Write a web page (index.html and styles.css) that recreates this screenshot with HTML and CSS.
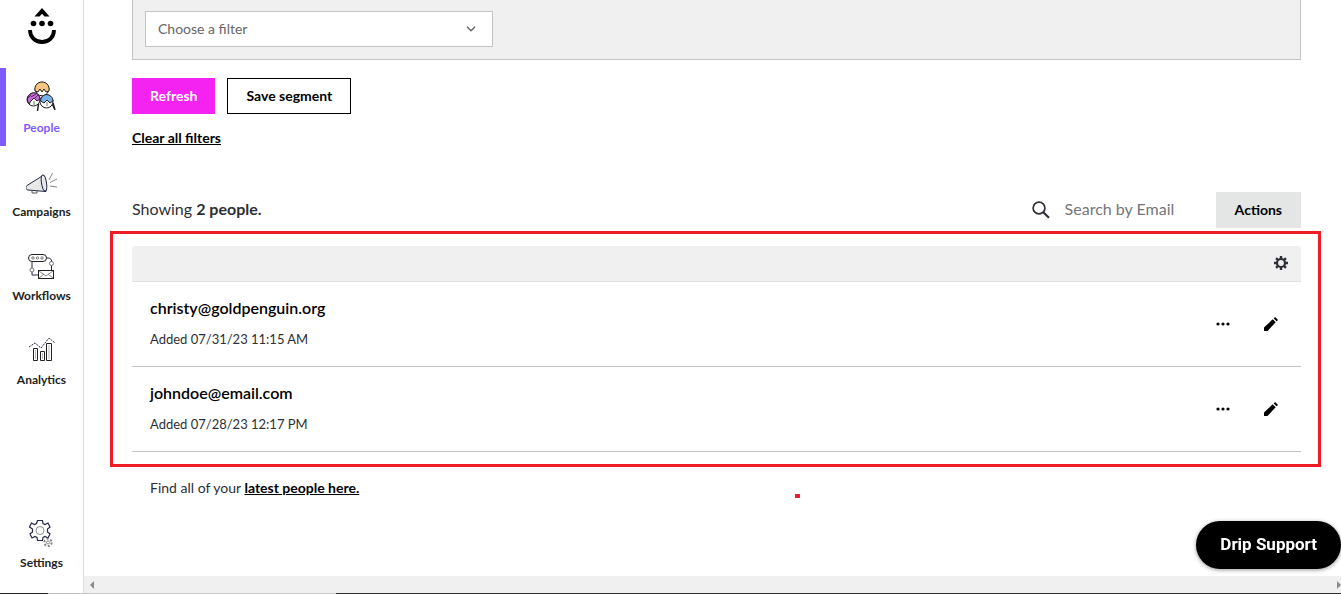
FILE: index.html
```html
<!DOCTYPE html>
<html lang="en">

<head>
    <meta charset="UTF-8">
    <title>People</title>
    <link rel="stylesheet" href="styles.css">
</head>

<body>
    <div class="app">
        <nav class="sidebar">
            <a class="logo" href="#" aria-label="Home">
                <svg width="28" height="36" viewBox="0 0 28 36">
                    <path d="M6.500 8.500 14 0l7.500 8.500h-5L14 5.800l-2.500 2.700z" />
                    <circle cx="5.500" cy="15.500" r="2.800" />
                    <circle cx="14" cy="15.500" r="2.800" />
                    <circle cx="22.500" cy="15.500" r="2.800" />
                    <path d="M2 22c0 7 5 12 12 12s12-5 12-12" fill="none" stroke="#000" stroke-width="3.800" />
                </svg>
            </a>
            <a class="nav-item active" href="#">
                <svg width="32" height="32" viewBox="0 0 32 32" fill="#fff" stroke="#222" stroke-width="1">
                    <circle cx="16" cy="8" r="6.800" />
                    <path d="M9 10C7-2 25-2 23 10l-3 1-2-3-2 3-2-3-2 3z" fill="#f6c581" />
                    <path d="M12.500 23l-1 7M25 20l4 9M27 22l2 7" fill="none" stroke-width="1.500" />
                    <circle cx="7.500" cy="18.500" r="6.500" />
                    <path d="M1.500 20c-1-10 12-11 12.500-2l-3 2-3-3-3 3-2 3z" fill="#c66bd4" />
                    <path d="M2 17l3-3m0 2l5-3m-1 4l3-3" stroke="#5d2470" />
                    <circle cx="20.500" cy="20.500" r="6.500" />
                    <path d="M14.500 20c1-9 12-8 12.500 0l-3 2-3-3-3 3z" fill="#79b2e9" />
                    <path d="M8 20v4M21 21v4" stroke="#777" />
                </svg>
                <span>People</span>
            </a>
            <a class="nav-item" href="#">
                <svg width="32" height="32" viewBox="0 0 32 32" fill="none" stroke="#222845" stroke-width="1">
                    <path d="M1 20.500 17 10.500l3 16-18-1.500c-2 0-3-3-1-4.500z" fill="#e8e8e8" />
                    <ellipse cx="18" cy="18" rx="2.500" ry="8" fill="#e8e8e8" transform="rotate(-9 18 18)" />
                    <path d="M6 25v3h5v-2.500" stroke="#555" />
                    <path d="M23 15l3.500-7M24 17.500l7-3.500M24 21l7 1" stroke="#888" />
                </svg>
                <span>Campaigns</span>
            </a>
            <a class="nav-item" href="#">
                <svg width="32" height="32" viewBox="0 0 32 32" fill="none" stroke="#222" stroke-width="1">
                    <rect x="2.500" y="5.500" width="18" height="7" rx="3.500" />
                    <g stroke="#777">
                        <circle cx="7" cy="9" r="1.200" />
                        <circle cx="11.500" cy="9" r="1.200" />
                        <circle cx="16" cy="9" r="1.200" />
                    </g>
                    <path d="M20.500 9h3l2 2v2M25.500 16v5M6 13v8M6 23v3h6.500" stroke="#222845" />
                    <circle cx="25.500" cy="14.500" r="2" fill="#fff" stroke="#777" />
                    <circle cx="6" cy="21" r="2" fill="#fff" stroke="#777" />
                    <rect x="12.500" y="21.500" width="15" height="8" fill="#fff" />
                    <path d="M13 22l7 5 7-5M13 29l5-4M27 29l-5-4" stroke="#888" />
                </svg>
                <span>Workflows</span>
            </a>
            <a class="nav-item" href="#">
                <svg width="32" height="32" viewBox="0 0 32 32" fill="none" stroke="#222" stroke-width="1">
                    <path d="M7.500 15.500h4v12h-4zM14.500 18.500h4v9h-4zM20.500 10.500h5v17h-5z" />
                    <path d="M9.500 17v9M16.500 20v6M23 12v14" stroke="#bbb" />
                    <path d="M3 14l6-4 6 5 8-10 6 5" stroke="#222845" stroke-dasharray="2 1" />
                </svg>
                <span>Analytics</span>
            </a>
            <a class="nav-item settings" href="#">
                <svg width="32" height="32" viewBox="0 0 32 32" fill="none" stroke="#222845" stroke-width="1.200">
                    <path d="M11.500 4.500h5l.5 3 2 1 3-1.500 2 4-2.500 2v3l2.500 2-2 4-3-1.500-2 1-.5 3h-5l-.5-3-2-1-3 1.500-2-4 2.500-2v-3L3.500 11l2-4 3 1.500 2-1z" />
                    <circle cx="14" cy="14.500" r="4" stroke="#888" stroke-width="1" />
                    <circle cx="22" cy="26.500" r="3.600" stroke="#888" stroke-width="2" stroke-dasharray="2 1.770" />
                    <circle cx="22" cy="26.500" r="1.500" stroke="#888" stroke-width="1" />
                </svg>
                <span>Settings</span>
            </a>
        </nav>

        <div class="page">
            <main class="content">
                <div class="filter-panel">
                    <div class="select-wrap">
                        <select class="filter-select" aria-label="Filter">
                            <option>Choose a filter</option>
                        </select>
                        <svg class="chevron" width="10" height="6" viewBox="0 0 10 6" fill="none" stroke="#666" stroke-width="1.400">
                            <path d="M1 .8l4 4 4-4" />
                        </svg>
                    </div>
                </div>

                <div class="buttons">
                    <button class="btn btn-primary" type="button">Refresh</button>
                    <button class="btn btn-outline" type="button">Save segment</button>
                </div>
                <a class="clear" href="#">Clear all filters</a>

                <div class="toolbar">
                    <p class="count">Showing <strong>2 people.</strong></p>
                    <label class="search">
                        <svg width="18" height="18" viewBox="0 0 18 18" fill="none" stroke="#2d2f36" stroke-width="1.700">
                            <circle cx="7" cy="7" r="5.900" />
                            <path d="M11.200 11.200l5.800 5.600" stroke-width="2.200" />
                        </svg>
                        <input type="text" placeholder="Search by Email" aria-label="Search by Email">
                    </label>
                    <button class="btn btn-grey" type="button">Actions</button>
                </div>

                <div class="highlight">
                    <table class="people">
                        <thead>
                            <tr>
                                <th colspan="2">
                                    <button class="icon-btn" type="button" aria-label="Table settings">
                                        <svg width="14" height="14" viewBox="0 0 14 14" fill="none" stroke="#2d2f36">
                                            <circle cx="7" cy="7" r="4" stroke-width="2.200" />
                                            <path d="M7 0v3M7 11v3M0 7h3M11 7h3M2.050 2.050l2 2M9.950 9.950l2 2M11.950 2.050l-2 2M4.050 9.950l-2 2" stroke-width="2.400" />
                                        </svg>
                                    </button>
                                </th>
                            </tr>
                        </thead>
                        <tbody>
                            <tr>
                                <td>
                                    <a class="email" href="#">christy@goldpenguin.org</a>
                                    <p class="added">Added 07/31/23 11:15 AM</p>
                                </td>
                                <td class="actions">
                                    <button class="icon-btn" type="button" aria-label="More">
                                        <svg width="14" height="14" viewBox="0 0 14 14">
                                            <circle cx="2" cy="7" r="1.600" />
                                            <circle cx="7" cy="7" r="1.600" />
                                            <circle cx="12" cy="7" r="1.600" />
                                        </svg>
                                    </button>
                                    <button class="icon-btn" type="button" aria-label="Edit">
                                        <svg width="14" height="14" viewBox="0 0 14 14">
                                            <path d="M0 14v-3.500l8.700-8.200 3 3L3.500 14zM9.700 1.400 11.100 0 14 2.900l-1.400 1.400z" />
                                        </svg>
                                    </button>
                                </td>
                            </tr>
                            <tr>
                                <td>
                                    <a class="email" href="#">johndoe@email.com</a>
                                    <p class="added">Added 07/28/23 12:17 PM</p>
                                </td>
                                <td class="actions">
                                    <button class="icon-btn" type="button" aria-label="More">
                                        <svg width="14" height="14" viewBox="0 0 14 14">
                                            <circle cx="2" cy="7" r="1.600" />
                                            <circle cx="7" cy="7" r="1.600" />
                                            <circle cx="12" cy="7" r="1.600" />
                                        </svg>
                                    </button>
                                    <button class="icon-btn" type="button" aria-label="Edit">
                                        <svg width="14" height="14" viewBox="0 0 14 14">
                                            <path d="M0 14v-3.500l8.700-8.200 3 3L3.500 14zM9.700 1.400 11.100 0 14 2.900l-1.400 1.400z" />
                                        </svg>
                                    </button>
                                </td>
                            </tr>
                        </tbody>
                    </table>
                </div>

                <p class="latest">Find all of your <a href="#">latest people here.</a></p>
            </main>
            <div class="scrollbar">
                <svg width="4" height="8" viewBox="0 0 4 8"><path d="M4 0v8L0 4z" /></svg>
                <svg width="4" height="8" viewBox="0 0 4 8"><path d="M0 0v8l4-4z" /></svg>
            </div>
        </div>
    </div>
    <div class="bottom-edge"></div>
    <div class="mark"></div>
    <button class="support" type="button">Drip Support</button>
</body>

</html>
```
FILE: styles.css
```css
* {
    margin: 0;
    padding: 0;
    box-sizing: border-box;
}

body {
    display: flex;
    flex-direction: column;
    min-height: 100vh;
    font-family: Lato, "Liberation Sans", sans-serif;
    font-size: 14px;
    line-height: 20px;
    color: #2d2f36;
    background-color: #fff;
}

a {
    color: #000;
}

svg {
    display: block;
}

button,
input,
select {
    font-family: inherit;
}

button {
    cursor: pointer;
}

.app {
    display: flex;
    flex: 1;
}

/* sidebar */
.sidebar {
    display: flex;
    flex-direction: column;
    gap: 6px;
    width: 84px;
    padding: 8px 0 12px;
    border-right: 1px solid #dcdcdc;
}

.logo {
    display: flex;
    justify-content: center;
    height: 54px;
}

.nav-item {
    display: flex;
    flex-direction: column;
    align-items: center;
    gap: 5px;
    height: 78px;
    padding: 13px 0 0;
    font-size: 12px;
    font-weight: 700;
    color: #222;
    text-decoration: none;
}

.nav-item.active {
    padding-right: 6px;
    border-left: 6px solid #7f5bff;
    color: #7f5bff;
}

.nav-item.settings {
    margin-top: auto;
}

/* content */
.page {
    display: flex;
    flex: 1;
    flex-direction: column;
    min-width: 0;
}

.content {
    flex: 1;
    padding: 0 40px 0 48px;
}

.filter-panel {
    padding: 11px 12px 12px;
    border: 1px solid #c4c4c4;
    border-top: 0;
    background-color: #f0f0f0;
}

.select-wrap {
    display: grid;
    align-items: center;
    width: 348px;
}

.filter-select {
    grid-area: 1 / 1;
    width: 100%;
    height: 36px;
    padding: 0 12px 2px;
    border: 1px solid #c4c4c4;
    border-radius: 0;
    appearance: none;
    background-color: #fff;
    font-size: 14px;
    color: #666;
}

.chevron {
    grid-area: 1 / 1;
    justify-self: end;
    margin-right: 17px;
    pointer-events: none;
}

.buttons {
    display: flex;
    gap: 12px;
    margin: 18px 0 14px;
}

.btn {
    height: 36px;
    padding: 0 17px 2px;
    border: 1px solid transparent;
    font-size: 14px;
    font-weight: 700;
    color: #000;
}

.btn-primary {
    background-color: #f423f1;
    color: #fff;
}

.btn-outline {
    padding: 0 18px 2px;
    border-color: #000;
    background-color: #fff;
}

.btn-grey {
    padding: 0 18px 2px;
    background-color: #e4e6e5;
}

.clear {
    display: inline-block;
    font-weight: 700;
}

.toolbar {
    display: flex;
    align-items: center;
    margin: 44px 0 3px;
    font-size: 16px;
}

.count {
    flex: 1;
    padding-bottom: 2px;
}

.search {
    display: flex;
    align-items: center;
    gap: 15px;
    margin-right: 15px;
}

.search input {
    width: 136px;
    height: 36px;
    padding-bottom: 3px;
    border: 0;
    outline: none;
    font-size: 16px;
}

.search input::placeholder {
    color: #747679;
}

.highlight {
    margin: 0 -20px 0 -22px;
    padding: 12px 17px 12px 19px;
    border: 3px solid #ee1c25;
}

.people {
    width: 100%;
    border-spacing: 0;
}

.people th {
    height: 36px;
    padding: 0 13px 2px;
    border-bottom: 1px solid #e0e2e1;
    border-radius: 3px 3px 0 0;
    background-color: #f0f0f0;
}

.people th .icon-btn {
    margin-left: auto;
}

.people td {
    height: 85px;
    padding: 0 18px 2px;
    border-bottom: 1px solid #c4c4c4;
}

.people .actions {
    width: 120px;
    text-align: right;
    white-space: nowrap;
}

.email {
    font-size: 16px;
    font-weight: 600;
    text-decoration: none;
}

.added {
    margin-top: 10px;
    font-size: 13px;
}

.icon-btn {
    display: block;
    padding: 0;
    border: 0;
    background: none;
}

.actions .icon-btn {
    display: inline-block;
    margin: 0 5px 0 25px;
    vertical-align: middle;
}

.latest {
    padding: 11px 18px;
}

.latest a {
    font-weight: 700;
}

.scrollbar {
    display: flex;
    align-items: center;
    justify-content: space-between;
    height: 17px;
    padding: 0 0 0 6px;
    background-color: #f0f0f0;
    fill: #8a8a8a;
}

.bottom-edge {
    height: 1px;
    background: linear-gradient(to right, #222 48px, #c4c4c4 48px, #c4c4c4 336px, #333 336px);
}

/* overlays */
.mark {
    position: absolute;
    top: 494px;
    left: 795px;
    width: 5px;
    height: 4px;
    background-color: #ee1c25;
}

.support {
    position: fixed;
    right: 0;
    bottom: 25px;
    height: 48px;
    padding: 0 24px 2px;
    border: 0;
    border-radius: 24px;
    background-color: #000;
    box-shadow: 0 1px 4px rgba(0, 0, 0, 0.4);
    font-family: Roboto, "Liberation Sans", sans-serif;
    font-size: 17px;
    font-weight: 700;
    color: #fff;
}
```
